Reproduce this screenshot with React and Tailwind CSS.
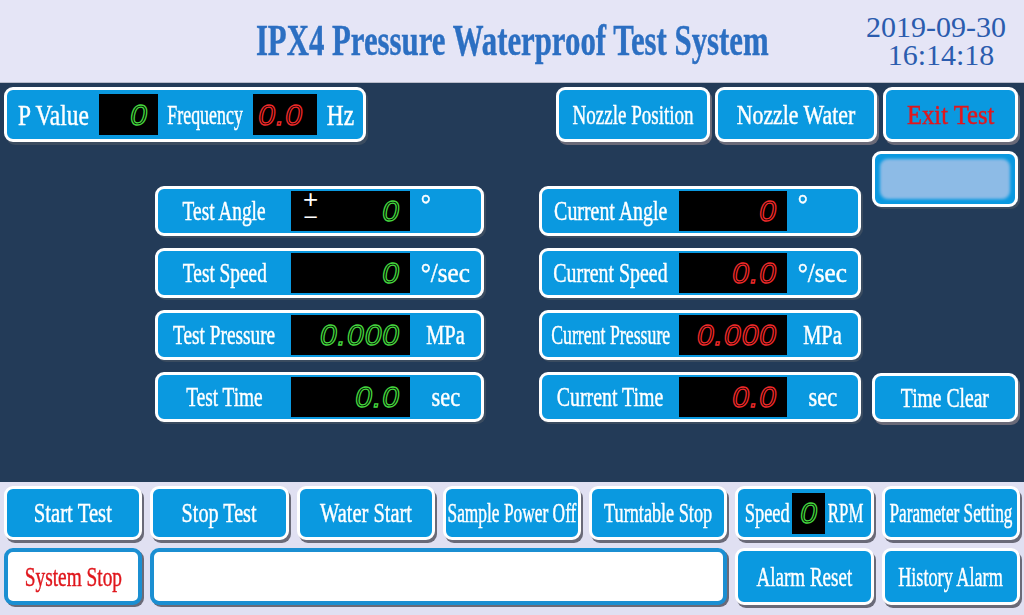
import React from "react";

const BLUE = "bg-[#0a99e0]";

function T({ children, s = "scale-x-[0.74]", className = "" }) {
  return (
    <span className={`inline-block whitespace-nowrap leading-none [-webkit-text-stroke:0.45px_currentColor] ${s} ${className}`}>
      {children}
    </span>
  );
}

function Seg({ value, red, className = "", pr = "pr-[10px]" }) {
  const stroke = red
    ? "[-webkit-text-stroke:1.3px_#f02a2a]"
    : "[-webkit-text-stroke:1.3px_#45d63e]";
  return (
    <div className={`bg-black flex items-center justify-end ${pr} ${className}`}>
      <span className={`font-['Liberation_Sans',sans-serif] italic text-[30px] leading-none text-transparent tracking-[1px] ${stroke}`}>
        {value}
      </span>
    </div>
  );
}

function Btn({ children, className = "", red }) {
  return (
    <div
      className={`rounded-[9px] border-[3px] border-white ${BLUE} shadow-[2px_3px_0_#6a6a78] flex items-center justify-center text-[28px] ${red ? "text-[#e3161c]" : "text-white"} ${className}`}
    >
      {children}
    </div>
  );
}

function Row({ label, ls = "scale-x-[0.69]", value, unit, us = "scale-x-[0.75]", red, labelW, dispW, deg, pm }) {
  return (
    <div className={`h-[50px] rounded-[9px] border-[3px] border-white ${BLUE} shadow-[2px_2px_0_#3b4c60] flex items-center text-white`}>
      <div className={`${labelW} flex justify-center text-[28px]`}>
        <T s={ls}>{label}</T>
      </div>
      <div className={`relative ${dispW} h-[40px]`}>
        <Seg value={value} red={red} className="h-full" />
        {pm && (
          <div className="absolute left-[12px] -top-[2px] flex flex-col items-center text-white font-['Liberation_Sans',sans-serif] leading-none">
            <span className="text-[26px] leading-[20px]">+</span>
            <span className="text-[22px] leading-[14px]">–</span>
          </div>
        )}
      </div>
      <div className="flex-1 flex justify-center text-[28px]">
        {deg ? (
          <T s="scale-x-[0.9]" className="-mt-[14px]">
            °<span className="invisible">/sec</span>
          </T>
        ) : (
          <T s={us}>{unit}</T>
        )}
      </div>
    </div>
  );
}

export default function App() {
  return (
    <div className="w-[1024px] h-[615px] overflow-hidden flex flex-col font-['Liberation_Serif',serif] bg-[#233b58]">
      {/* header */}
      <div className="h-[83px] bg-[#e5e5f6] grid grid-cols-[1fr_520px_1fr] items-center border-b border-[#b9bccb]">
        <div />
        <div className="flex justify-center">
          <T s="scale-x-[0.7]" className="text-[44px] font-bold text-[#2c6fc2]">
            IPX4 Pressure Waterproof Test System
          </T>
        </div>
        <div className="justify-self-end pr-[18px] text-center text-[30px] leading-[28px] text-[#2b5cae]">
          <div>2019-09-30</div>
          <div className="pl-[10px]">16:14:18</div>
        </div>
      </div>

      {/* main panel */}
      <div className="flex-1 flex flex-col px-[4px] pt-[4px]">
        <div className="h-[55px] flex items-stretch justify-between pr-[2px]">
          <div className={`w-[362px] rounded-[9px] border-[3px] border-white ${BLUE} shadow-[2px_3px_0_#3b4c60] flex items-center text-white`}>
            <div className="w-[92px] flex justify-center text-[30px]">
              <T s="scale-x-[0.78]">P Value</T>
            </div>
            <Seg value="0" className="w-[59px] h-[41px]" />
            <div className="w-[95px] flex justify-center text-[28px]">
              <T s="scale-x-[0.64]">Frequency</T>
            </div>
            <Seg value="0.0" red className="w-[64px] h-[41px]" pr="pr-[14px]" />
            <div className="flex-1 flex justify-center text-[30px]">
              <T s="scale-x-[0.78]">Hz</T>
            </div>
          </div>
          <div className="flex gap-[5px]">
            <Btn className="w-[154px]">
              <T s="scale-x-[0.68]">Nozzle Position</T>
            </Btn>
            <Btn className="w-[162px]">
              <T s="scale-x-[0.78]">Nozzle Water</T>
            </Btn>
            <Btn className="w-[135px] ml-[1px]" red>
              <T s="scale-x-[0.88]" className="[-webkit-text-stroke:0.8px_currentColor]">Exit Test</T>
            </Btn>
          </div>
        </div>

        <div className="flex ml-[151px]">
          <div className="w-[329px] mt-[44px] flex flex-col gap-[12px]">
            <Row label="Test Angle" value="0" labelW="w-[133px]" dispW="w-[119px]" deg pm />
            <Row label="Test Speed" value="0" unit="°/sec" us="scale-x-[0.9]" labelW="w-[133px]" dispW="w-[119px]" />
            <Row label="Test Pressure" value="0.000" unit="MPa" us="scale-x-[0.73]" labelW="w-[133px]" dispW="w-[119px]" />
            <Row label="Test Time" value="0.0" unit="sec" us="scale-x-[0.8]" labelW="w-[133px]" dispW="w-[119px]" />
          </div>
          <div className="w-[322px] ml-[55px] mt-[44px] flex flex-col gap-[12px]">
            <Row label="Current Angle" ls="scale-x-[0.71]" value="0" red labelW="w-[137px]" dispW="w-[108px]" deg />
            <Row label="Current Speed" ls="scale-x-[0.71]" value="0.0" red unit="°/sec" us="scale-x-[0.9]" labelW="w-[137px]" dispW="w-[108px]" />
            <Row label="Current Pressure" ls="scale-x-[0.635]" value="0.000" red unit="MPa" us="scale-x-[0.73]" labelW="w-[137px]" dispW="w-[108px]" />
            <Row label="Current Time" ls="scale-x-[0.71]" value="0.0" red unit="sec" us="scale-x-[0.8]" labelW="w-[137px]" dispW="w-[108px]" />
          </div>
          <div className="w-[146px] ml-[11px] flex flex-col">
            <div className={`mt-[9px] h-[56px] rounded-[9px] border-[3px] border-white ${BLUE} shadow-[2px_2px_0_#3b4c60] p-[5px]`}>
              <div className="w-full h-full rounded-[8px] bg-[#8dbbe6] blur-[1.5px]" />
            </div>
            <Btn className="mt-auto h-[49px]">
              <T s="scale-x-[0.7]">Time Clear</T>
            </Btn>
          </div>
        </div>
      </div>

      {/* bottom controls */}
      <div className="h-[133px] bg-[#e0e0f2] grid grid-cols-7 grid-rows-[54px_57px] gap-x-[8px] gap-y-[8px] px-[4px] pt-[4px]">
        <Btn><T s="scale-x-[0.74]">Start Test</T></Btn>
        <Btn><T s="scale-x-[0.72]">Stop Test</T></Btn>
        <Btn><T s="scale-x-[0.73]">Water Start</T></Btn>
        <Btn><T s="scale-x-[0.62]">Sample Power Off</T></Btn>
        <Btn><T s="scale-x-[0.65]">Turntable Stop</T></Btn>
        <Btn className="gap-0">
          <div className="w-[50px] flex justify-center"><T s="scale-x-[0.66]">Speed</T></div>
          <div className="w-[33px] h-[41px] bg-black flex items-center justify-center">
            <span className="font-['Liberation_Sans',sans-serif] italic text-[30px] leading-none text-transparent [-webkit-text-stroke:1.3px_#45d63e]">0</span>
          </div>
          <div className="w-[42px] flex justify-center"><T s="scale-x-[0.6]">RPM</T></div>
        </Btn>
        <Btn><T s="scale-x-[0.615]">Parameter Setting</T></Btn>

        <div className="rounded-[9px] border-[4px] border-[#1b8fd2] bg-white shadow-[2px_2px_0_#6a6a78] flex items-center justify-center text-[28px] text-[#e0161c]">
          <T s="scale-x-[0.69]">System Stop</T>
        </div>
        <div className="col-span-4 rounded-[9px] border-[4px] border-[#1b8fd2] bg-white shadow-[2px_2px_0_#6a6a78]" />
        <Btn><T s="scale-x-[0.68]">Alarm Reset</T></Btn>
        <Btn><T s="scale-x-[0.65]">History Alarm</T></Btn>
      </div>
    </div>
  );
}
